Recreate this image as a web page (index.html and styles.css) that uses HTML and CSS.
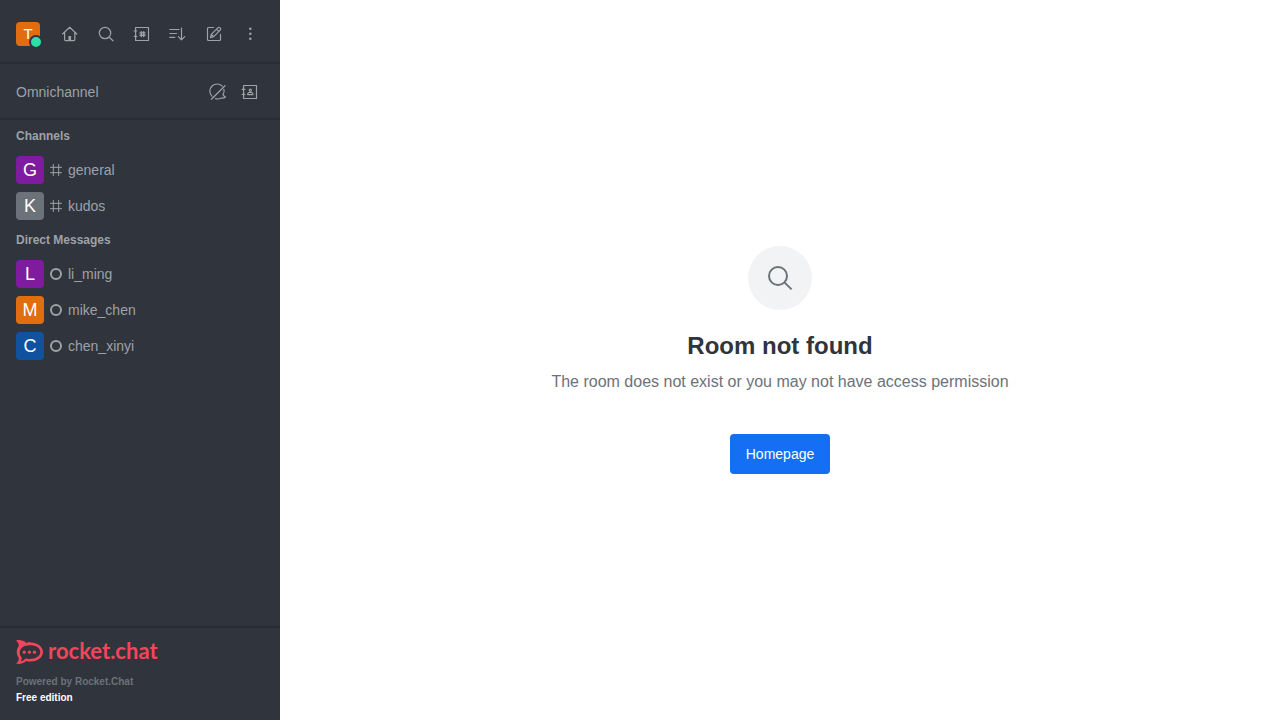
FILE: index.html
```html
<!DOCTYPE html>
<html lang="en">
<head>
<meta charset="utf-8">
<meta name="viewport" content="width=device-width, initial-scale=1">
<title>Rocket.Chat</title>
<link rel="stylesheet" href="styles.css">
</head>
<body>
<div class="app">
  <aside class="sidebar">
    <header class="topbar">
      <button class="user" type="button" aria-label="User menu">T<span class="presence"></span></button>
      <nav class="tools">
        <button class="tool" type="button" aria-label="Home"><svg class="icon" viewBox="0 0 20 20"><path d="M2.600 10 9.700 3.300 16.800 10M4.600 8.600v7a1 1 0 0 0 1 1h8.200a1 1 0 0 0 1-1v-7"/><path class="solid" d="M8.400 16.600v-4a.7.7 0 0 1 .7-.7h1.300a.7.7 0 0 1 .7.7v4z"/></svg></button>
        <button class="tool" type="button" aria-label="Search"><svg class="icon" viewBox="0 0 20 20"><circle cx="9" cy="9" r="5.700"/><path d="m13.200 13.200 3.800 3.600"/></svg></button>
        <button class="tool" type="button" aria-label="Directory"><svg class="icon" viewBox="0 0 20 20"><path d="M3.600 3.500h12.900v13H3.600zM2.200 7h2.600M2.200 12.300h2.600"/><path class="bold" d="M9.300 7.600v5M11.700 7.600v5M8 8.900h5M8 11.300h5"/></svg></button>
        <button class="tool" type="button" aria-label="Sort"><svg class="icon" viewBox="0 0 20 20"><path d="M1.800 5.500h9.200M1.800 9.500h6.800M1.800 13.400h5M13.500 4v11.600M10.300 12.600l3.200 3.200 3.200-3.200"/></svg></button>
        <button class="tool" type="button" aria-label="Create new"><svg class="icon" viewBox="0 0 20 20"><path d="M9.600 3.500H4.500a1 1 0 0 0-1 1v11a1 1 0 0 0 1 1h11a1 1 0 0 0 1-1v-5.100M6.500 13.600l.8-3.200 6.500-6.500a1.600 1.600 0 0 1 2.400 2.300l-6.500 6.500zM12.500 5.200l2.400 2.400M7.300 10.400l2.400 2.300"/></svg></button>
        <button class="tool" type="button" aria-label="More"><svg class="icon" viewBox="0 0 20 20"><g class="solid"><circle cx="10.300" cy="4.700" r="1.300"/><circle cx="10.300" cy="9.700" r="1.300"/><circle cx="10.300" cy="14.700" r="1.300"/></g></svg></button>
      </nav>
    </header>

    <section class="omni">
      <span class="omni-name">Omnichannel</span>
      <button class="tool" type="button" aria-label="Turn on answer chats"><svg class="icon" viewBox="0 0 20 20"><path d="M14.200 4.200A7 7 0 0 0 3.900 14.200M15.900 7.400c.5 1.900.1 3.900-1 5.400 .6 1 1.500 1.700 2.600 2.200-1.300 1-2.800 1.300-4.200 1a7 7 0 0 1-5.800.6M3.400 17.200 17 3.700"/></svg></button>
      <button class="tool" type="button" aria-label="Contact center"><svg class="icon" viewBox="0 0 20 20"><path d="M3.600 3.500h12.900v13H3.600zM2.200 7.400h2.600M2.200 12.400h2.600"/><circle cx="10.300" cy="8.200" r="1.100"/><path d="M7.700 12.600v-1l1.300-1.100h2.600l1.300 1.100v1z"/></svg></button>
    </section>

    <nav class="rooms">
      <h2 class="group">Channels</h2>
      <a class="room" href="#"><span class="avatar purple">G</span><svg class="kind" viewBox="0 0 12 12"><path d="M3.300.5v11M8.700.5v11M.5 3.300h11M.5 8.700h11"/></svg><span>general</span></a>
      <a class="room" href="#"><span class="avatar gray">K</span><svg class="kind" viewBox="0 0 12 12"><path d="M3.300.5v11M8.700.5v11M.5 3.300h11M.5 8.700h11"/></svg><span>kudos</span></a>
      <h2 class="group">Direct Messages</h2>
      <a class="room" href="#"><span class="avatar purple">L</span><span class="kind offline"></span><span>li_ming</span></a>
      <a class="room" href="#"><span class="avatar orange">M</span><span class="kind offline"></span><span>mike_chen</span></a>
      <a class="room" href="#"><span class="avatar blue">C</span><span class="kind offline"></span><span>chen_xinyi</span></a>
    </nav>

    <footer class="footer">
      <a class="brand" href="#">
        <svg class="mark" viewBox="0 0 27 24"><path fill-rule="evenodd" d="M0 .4C3.600-.5 7.600.4 10.200 2.900 12 2.400 13.200 2.300 15 2.400 22 2.700 27 7 27 12s-5 9.300-12 9.600c-1.800 0-3-.1-4.800-.5C7.600 23.600 3.600 24.500 0 23.600c2.300-2 3.300-4 2.500-6C.2 14.100.2 9.900 2.500 6.400 3.300 4.400 2.300 2.400 0 .4zM8.600 6.100C3 8.500 2.600 14 5.400 16.800 6 18.600 5.700 20.200 4.700 21.500 6.700 21.100 8 20.200 9.300 18.500 16.600 20.200 24.300 17.300 24.300 12S16.500 3.700 8.600 6.100z"/><circle cx="8.300" cy="12.200" r="1.600"/><circle cx="13.400" cy="12.200" r="1.600"/><circle cx="18.500" cy="12.200" r="1.600"/></svg>
        <span class="wordmark">rocket.chat</span>
      </a>
      <p class="powered">Powered by Rocket.Chat</p>
      <p class="edition">Free edition</p>
    </footer>
  </aside>

  <main class="main">
    <div class="badge"><svg class="badge-icon" viewBox="0 0 32 32"><circle cx="14" cy="14" r="9"/><path d="m20.400 20.400 7.200 7"/></svg></div>
    <h1 class="title">Room not found</h1>
    <p class="subtitle">The room does not exist or you may not have access permission</p>
    <button class="primary" type="button">Homepage</button>
  </main>
</div>
</body>
</html>
```
FILE: styles.css
```css
* { box-sizing: border-box; }
body { margin: 0; font-family: "Liberation Sans", Arial, sans-serif; }
h1, h2, p { margin: 0; }
button { border: 0; padding: 0; font-family: inherit; cursor: pointer; }
a { color: inherit; text-decoration: none; }
svg { display: block; }

.app { display: flex; min-height: 100vh; }

.sidebar {
  display: flex;
  flex-direction: column;
  flex: 0 0 280px;
  background: #2f343d;
  color: #9ea2a8;
  font-size: 14px;
  line-height: 20px;
}

.topbar {
  display: flex;
  align-items: center;
  justify-content: space-between;
  padding: 20px 16px 14px;
  border-bottom: 2px solid #282d35;
}
.user {
  position: relative;
  width: 24px;
  height: 24px;
  border-radius: 4px;
  background: #e26d0e;
  color: #fff;
  font-size: 15px;
  line-height: 24px;
}
.presence {
  position: absolute;
  right: -3px;
  bottom: -3px;
  width: 14px;
  height: 14px;
  border: 2px solid #2f343d;
  border-radius: 50%;
  background: #2de0a5;
}
.tools { display: flex; gap: 8px; }
.tool {
  display: flex;
  align-items: center;
  justify-content: center;
  width: 28px;
  height: 28px;
  background: none;
  color: inherit;
}
.icon {
  width: 20px;
  height: 20px;
  fill: none;
  stroke: currentColor;
  stroke-width: 1.2;
  stroke-linecap: round;
  stroke-linejoin: round;
}
.solid { fill: currentColor; stroke: none; }
.bold { stroke-width: 1.4; }

.omni {
  display: flex;
  align-items: center;
  gap: 4px;
  padding: 14px 16px 12px;
  border-bottom: 2px solid #282d35;
}
.omni-name { flex: 1; }

.rooms { flex: 1; }
.group {
  padding: 0 16px;
  font-size: 12px;
  font-weight: 700;
  line-height: 32px;
}
.room {
  display: flex;
  align-items: center;
  gap: 6px;
  height: 36px;
  padding: 0 16px;
}
.avatar {
  width: 28px;
  height: 28px;
  border-radius: 4px;
  color: #fff;
  font-size: 18px;
  line-height: 28px;
  text-align: center;
}
.purple { background: #7f1b9f; }
.gray { background: #6c727a; }
.orange { background: #e26d0e; }
.blue { background: #10529e; }
.kind {
  width: 12px;
  height: 12px;
  fill: none;
  stroke: currentColor;
  stroke-linecap: round;
}
.offline { border: 2px solid #9ea2a8; border-radius: 50%; }

.footer {
  padding: 12px 16px 14px;
  border-top: 2px solid #282d35;
  font-size: 10px;
  font-weight: 700;
  line-height: 16px;
}
.brand {
  display: flex;
  align-items: center;
  gap: 5px;
  height: 24px;
  margin-bottom: 10px;
  color: #f5455c;
}
.mark { width: 27px; height: 24px; fill: currentColor; }
.wordmark { font-family: Lato, sans-serif; font-size: 22px; line-height: 22px; padding-bottom: 2px; }
.powered { color: #6c727a; }
.edition { color: #fff; }

.main {
  display: flex;
  flex: 1;
  flex-direction: column;
  align-items: center;
  justify-content: center;
  background: #fff;
  text-align: center;
}
.badge {
  display: flex;
  align-items: center;
  justify-content: center;
  width: 64px;
  height: 64px;
  margin-bottom: 20px;
  border-radius: 50%;
  background: #f2f3f5;
}
.badge-icon {
  width: 32px;
  height: 32px;
  fill: none;
  stroke: #6c727a;
  stroke-width: 2;
}
.title { margin-bottom: 8px; color: #2f343d; font-size: 24px; line-height: 32px; }
.subtitle { margin-bottom: 40px; color: #6c727a; font-size: 16px; line-height: 24px; }
.primary {
  height: 40px;
  padding: 0 16px;
  border-radius: 4px;
  background: #156ff5;
  color: #fff;
  font-size: 14px;
  line-height: 20px;
}
```
